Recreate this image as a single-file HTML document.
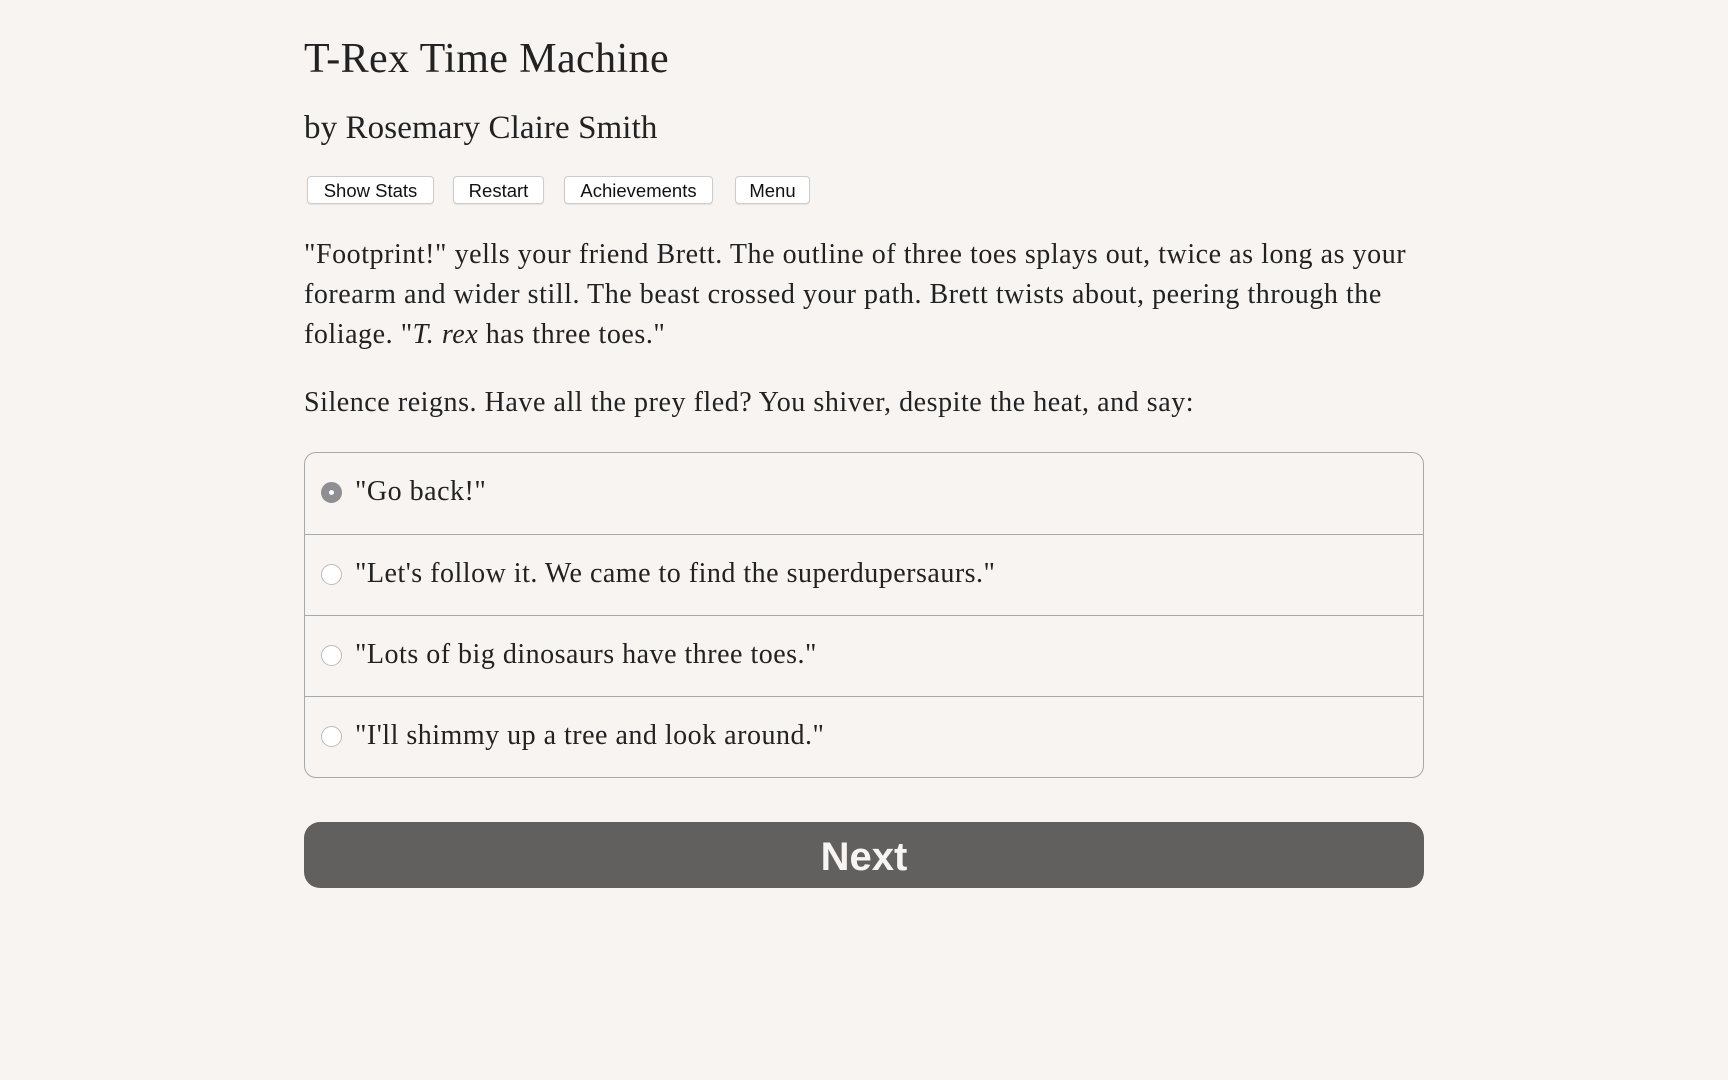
<!DOCTYPE html>
<html><head><meta charset="utf-8"><style>
html,body{margin:0;padding:0;background:#f7f4f1;width:1728px;height:1080px;overflow:hidden;color:#222;}
.serif{font-family:"Liberation Serif",serif;}
.abs{position:absolute;white-space:nowrap;}
h1{position:absolute;left:304px;top:35px;margin:0;font-weight:normal;font-size:42px;letter-spacing:0.4px;font-family:"Liberation Serif",serif;}
.by{left:304px;top:110px;font-size:33px;letter-spacing:0.1px;}
.btn{position:absolute;top:176px;height:26px;border:1px solid #ccc;border-radius:4px;background:#fff;font-family:"Liberation Sans",sans-serif;font-size:18.5px;line-height:27px;text-align:center;box-shadow:0 1px 1px rgba(0,0,0,.08);color:#111;}
.p{left:304px;font-size:28px;letter-spacing:0.55px;line-height:40px;}
.box{position:absolute;left:304px;top:452px;width:1118px;height:324px;border:1.5px solid #a8a8a8;border-radius:12px;}
.row{position:absolute;left:0;width:100%;height:81px;}
.row+.row{border-top:1.5px solid #a8a8a8;}
.radio{position:absolute;left:16px;top:29px;width:21px;height:21px;border:1px solid #bbb;border-radius:50%;background:#fff;box-sizing:border-box;}
.radio.sel{background:#8e8e93;border-color:#8e8e93;}
.radio.sel:after{content:"";position:absolute;left:7px;top:7px;width:5px;height:5px;border-radius:50%;background:#fff;}
.opt{position:absolute;left:50px;top:23px;font-size:28px;letter-spacing:0.5px;font-family:"Liberation Serif",serif;white-space:nowrap;}
.next{position:absolute;left:304px;top:822px;width:1120px;height:66px;background:#62605e;border-radius:16px;color:#f7f4f1;font-family:"Liberation Sans",sans-serif;font-weight:bold;font-size:40px;line-height:70px;text-align:center;}
</style></head><body>
<h1>T-Rex Time Machine</h1>
<div class="abs serif by">by Rosemary Claire Smith</div>
<div class="btn" style="left:307px;width:125px">Show Stats</div>
<div class="btn" style="left:453px;width:89px">Restart</div>
<div class="btn" style="left:564px;width:147px">Achievements</div>
<div class="btn" style="left:735px;width:73px">Menu</div>
<div class="abs serif p" style="top:235px">"Footprint!" yells your friend Brett. The outline of three toes splays out, twice as long as your</div>
<div class="abs serif p" style="top:275px">forearm and wider still. The beast crossed your path. Brett twists about, peering through the</div>
<div class="abs serif p" style="top:315px">foliage. "<i>T. rex</i> has three toes."</div>
<div class="abs serif p" style="top:383px">Silence reigns. Have all the prey fled? You shiver, despite the heat, and say:</div>
<div class="box">
<div class="row" style="top:0"><div class="radio sel"></div><div class="opt">"Go back!"</div></div>
<div class="row" style="top:81px"><div class="radio"></div><div class="opt">"Let's follow it. We came to find the superdupersaurs."</div></div>
<div class="row" style="top:162px"><div class="radio"></div><div class="opt">"Lots of big dinosaurs have three toes."</div></div>
<div class="row" style="top:243px"><div class="radio"></div><div class="opt">"I'll shimmy up a tree and look around."</div></div>
</div>
<div class="next">Next</div>
</body></html>
